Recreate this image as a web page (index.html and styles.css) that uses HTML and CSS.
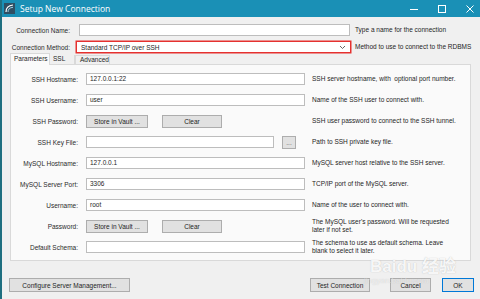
FILE: index.html
```html
<!DOCTYPE html>
<html lang="en">
<head>
    <meta charset="UTF-8">
    <title>Setup New Connection</title>
    <link rel="stylesheet" href="styles.css">
</head>
<body>
    <div class="window">
        <div class="titlebar">
            <svg class="app-icon" width="11" height="11" viewBox="0 0 11 11">
                <rect x="0" y="0" width="11" height="11" fill="#2f4f63"/>
                <path d="M2 9 C2 5 4 2.5 9 2" stroke="#ffffff" stroke-width="1.2" fill="none"/>
                <path d="M4 9 C4 6.5 5.5 4.5 9 4.3" stroke="#9fd3e6" stroke-width="1" fill="none"/>
            </svg>
            <span class="title">Setup New Connection</span>
            <div class="controls">
                <svg width="10" height="10" viewBox="0 0 10 10"><path d="M1 5.5 H9" stroke="#fff" stroke-width="1"/></svg>
                <svg width="10" height="10" viewBox="0 0 10 10"><rect x="1.5" y="1.5" width="7" height="7" stroke="#fff" stroke-width="1" fill="none"/></svg>
                <svg width="10" height="10" viewBox="0 0 10 10"><path d="M1.5 1.5 L8.5 8.5 M8.5 1.5 L1.5 8.5" stroke="#fff" stroke-width="1"/></svg>
            </div>
        </div>

        <div class="content">
            <div class="top-grid">
                <label class="lbl">Connection Name:</label>
                <div class="field"><div class="input name-input"></div></div>
                <div class="hint">Type a name for the connection</div>

                <label class="lbl">Connection Method:</label>
                <div class="field">
                    <div class="select">
                        <span>Standard TCP/IP over SSH</span>
                        <svg width="7" height="5" viewBox="0 0 7 5"><path d="M1 1 L3.5 3.5 L6 1" stroke="#555" stroke-width="0.9" fill="none"/></svg>
                    </div>
                </div>
                <div class="hint">Method to use to connect to the RDBMS</div>
            </div>

            <div class="tabs">
                <div class="tab active">Parameters</div>
                <div class="tab ssl">SSL</div>
                <div class="tab adv">Advanced</div>
            </div>

            <div class="panel">
                <label class="lbl">SSH Hostname:</label>
                <div class="input">127.0.0.1:22</div>
                <div class="hint">SSH server hostname, with&nbsp; optional port number.</div>

                <label class="lbl">SSH Username:</label>
                <div class="input">user</div>
                <div class="hint">Name of the SSH user to connect with.</div>

                <label class="lbl">SSH Password:</label>
                <div class="btn-row">
                    <button class="btn vault">Store in Vault ...</button>
                    <button class="btn clear">Clear</button>
                </div>
                <div class="hint">SSH user password to connect to the SSH tunnel.</div>

                <label class="lbl">SSH Key File:</label>
                <div class="key-row">
                    <div class="input key-input"></div>
                    <button class="btn dots">...</button>
                </div>
                <div class="hint">Path to SSH private key file.</div>

                <label class="lbl">MySQL Hostname:</label>
                <div class="input">127.0.0.1</div>
                <div class="hint">MySQL server host relative to the SSH server.</div>

                <label class="lbl">MySQL Server Port:</label>
                <div class="input">3306</div>
                <div class="hint">TCP/IP port of the MySQL server.</div>

                <label class="lbl">Username:</label>
                <div class="input">root</div>
                <div class="hint">Name of the user to connect with.</div>

                <label class="lbl">Password:</label>
                <div class="btn-row">
                    <button class="btn vault">Store in Vault ...</button>
                    <button class="btn clear">Clear</button>
                </div>
                <div class="hint two">The MySQL user's password. Will be requested<br>later if not set.</div>

                <label class="lbl">Default Schema:</label>
                <div class="input"></div>
                <div class="hint two">The schema to use as default schema. Leave<br>blank to select it later.</div>
            </div>

            <div class="footer">
                <button class="btn configure">Configure Server Management...</button>
                <div class="spacer"></div>
                <button class="btn test">Test Connection</button>
                <button class="btn cancel">Cancel</button>
                <button class="btn ok">OK</button>
            </div>
        </div>

        <div class="watermark">
            <div class="wm-big">Bai<span class="wm-du">du</span> 经验</div>
            <div class="wm-small">jingyan.baidu.com</div>
        </div>
    </div>
</body>
</html>
```

FILE: styles.css
```css
body{
    margin: 0;
    background-color: #f0f0f0;
    font-family: "Liberation Sans", Arial, sans-serif;
    font-size: 6.5px;
    color: #1e1e1e;
}
.window{
    position: relative;
    width: 478px;
    height: 299px;
    border-left: 2px solid #1f6f80;
    background-color: #f0f0f0;
    overflow: hidden;
}
.titlebar{
    height: 17px;
    background-color: #1a90b6;
    display: flex;
    align-items: center;
    color: white;
}
.app-icon{
    margin-left: 2px;
    margin-right: 5px;
}
.title{
    font-size: 8.5px;
    font-family: "Open Sans", "Liberation Sans", sans-serif;
}
.controls{
    margin-left: auto;
    display: flex;
    gap: 18px;
    margin-right: 5px;
}

/* top section */
.top-grid{
    display: grid;
    grid-template-columns: 68px 277px 1fr;
    grid-template-rows: 12px 12px;
    column-gap: 4px;
    row-gap: 5px;
    padding-top: 7px;
    align-items: center;
}
.lbl{
    text-align: right;
    white-space: nowrap;
    color: #2a2a2a;
}
.hint{
    white-space: nowrap;
    line-height: 8.5px;
}
.input{
    height: 12px;
    box-sizing: border-box;
    background-color: white;
    border: 1px solid #bdbdbd;
    padding-left: 3px;
    line-height: 10px;
}
.name-input{
    margin-left: 5px;
    margin-right: 1px;
}
.select{
    height: 12px;
    box-sizing: border-box;
    background-color: white;
    border: 1px solid #e5312f;
    box-shadow: 0 0 0 0.5px #e5312f;
    margin-left: 2px;
    display: flex;
    align-items: center;
    justify-content: space-between;
    padding: 0 4px 0 4px;
}

/* tabs */
.tabs{
    display: flex;
    align-items: flex-end;
    margin-left: 8px;
    height: 11px;
}
.tab{
    box-sizing: border-box;
    height: 9px;
    line-height: 8px;
    border: 1px solid #d9d9d9;
    border-bottom: none;
    padding: 0 3px;
    background-color: #f0f0f0;
}
.tab.active{
    height: 12px;
    margin-bottom: -1px;
    background-color: #fafafa;
    width: 40px;
    line-height: 10px;
    position: relative;
}
.tab.ssl{
    width: 25px;
    border-left: none;
    border-top: none;
    background-color: transparent;
}
.tab.adv{
    width: 35px;
    padding-left: 4px;
}

/* panel */
.panel{
    margin-left: 8px;
    width: 461px;
    box-sizing: border-box;
    background-color: #fafafa;
    border: 1px solid #d9d9d9;
    padding: 8px 0 7px 0;
    display: grid;
    grid-template-columns: 67px 219px 1fr;
    grid-auto-rows: 12px;
    column-gap: 8px;
    row-gap: 9px;
    align-items: center;
}
.panel .hint{
    margin-left: -1px;
}
.btn{
    font-family: "Liberation Sans", Arial, sans-serif;
    font-size: 6.5px;
    color: #1e1e1e;
    background-color: #e1e1e1;
    border: 1px solid #adadad;
    height: 13px;
    padding: 0;
    box-sizing: border-box;
}
.btn-row{
    display: flex;
    gap: 14px;
}
.btn.vault{
    width: 62px;
}
.btn.clear{
    width: 60px;
}
.key-row{
    display: flex;
    align-items: center;
}
.key-input{
    width: 188px;
}
.btn.dots{
    width: 14px;
    margin-left: 8px;
    color: #666;
}

/* footer */
.footer{
    display: flex;
    margin-top: 17px;
    margin-left: 7px;
    margin-right: 6px;
}
.spacer{
    flex: 1;
}
.btn.configure{
    width: 121px;
    height: 14px;
}
.btn.test{
    width: 60px;
    height: 14px;
}
.btn.cancel{
    width: 41px;
    height: 14px;
    margin-left: 20px;
}
.btn.ok{
    width: 32px;
    height: 14px;
    margin-left: 11px;
    border-color: #0078d7;
}

/* baidu watermark lying over the dialog */
.watermark{
    position: absolute;
    left: 368px;
    top: 252px;
    color: rgba(255, 255, 255, 0.9);
    text-shadow: 0 0 1px rgba(130, 130, 130, 0.5);
    pointer-events: none;
}
.wm-big{
    font-size: 17px;
    font-weight: bold;
    font-family: "Liberation Sans", "Noto Sans CJK SC", sans-serif;
}
.wm-small{
    position: absolute;
    left: -6px;
    top: 24px;
    font-size: 8px;
    white-space: nowrap;
    color: rgba(255, 255, 255, 0.55);
    text-shadow: 0 0 1px rgba(130, 130, 130, 0.35);
}
```
